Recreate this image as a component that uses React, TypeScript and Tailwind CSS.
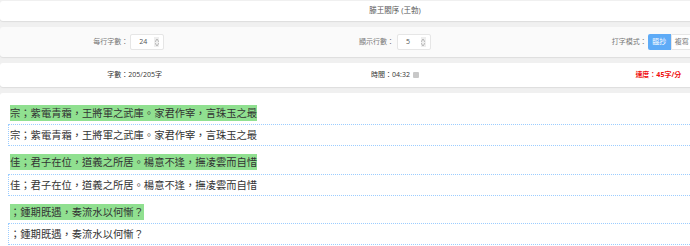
import React from 'react';

const lines = [
  '宗；紫電青霜，王將軍之武庫。家君作宰，言珠玉之最',
  '佳；君子在位，道義之所居。楊意不逢，撫凌雲而自惜',
  '；鍾期既遇，奏流水以何慚？',
];

function NumberBox({ value }: { value: string }) {
  return (
    <div className="w-[34px] h-[16px] bg-white border border-[#e6e6e6] rounded-[2px] flex items-center justify-between pl-[8px] pr-[4px]">
      <span className="text-[7px] text-[#555]">{value}</span>
      <div className="w-[5px] h-[10px] bg-[#eeeeee] flex flex-col items-center justify-center gap-[1px]">
        <svg width="4" height="3" viewBox="0 0 4 3">
          <path d="M0 3 L2 0 L4 3" fill="none" stroke="#aaa" strokeWidth="0.8" />
        </svg>
        <svg width="4" height="3" viewBox="0 0 4 3">
          <path d="M0 0 L2 3 L4 0" fill="none" stroke="#aaa" strokeWidth="0.8" />
        </svg>
      </div>
    </div>
  );
}

export default function App() {
  return (
    <div className="w-[690px] h-[246px] overflow-hidden bg-[#f0f0f0] font-['Open_Sans','Noto_Sans_CJK_TC',sans-serif]">
      <div className="w-[790px] flex flex-col gap-[6px] pt-[1px]">
        {/* 標題 */}
        <div className="h-[20px] bg-white rounded-[3px] shadow-[0_1px_1px_rgba(0,0,0,0.08)] flex items-center justify-center text-[7.5px] text-[#555]">
          滕王閣序 (王勃)
        </div>

        {/* 設定 */}
        <div className="h-[30px] bg-[#fafafa] rounded-[3px] shadow-[0_1px_1px_rgba(0,0,0,0.08)] grid grid-cols-3 items-center text-[7px] text-[#777]">
          <div className="flex items-center justify-center gap-[2px] pr-[6px]">
            <span>每行字數：</span>
            <NumberBox value="24" />
          </div>
          <div className="flex items-center justify-center gap-[3px]">
            <span>顯示行數：</span>
            <NumberBox value="5" />
          </div>
          <div className="flex items-center justify-center gap-[1px] pr-[4px]">
            <span>打字模式：</span>
            <div className="flex">
              <button className="w-[23px] h-[16px] bg-[#5eabf7] text-white rounded-l-[2px] flex items-center justify-center">
                臨抄
              </button>
              <button className="w-[30px] h-[16px] bg-white border border-[#e6e6e6] rounded-r-[2px] text-[#777] flex items-center pl-[3px]">
                複寫
              </button>
            </div>
          </div>
        </div>

        {/* 統計 */}
        <div className="h-[24px] bg-white rounded-[3px] shadow-[0_1px_1px_rgba(0,0,0,0.08)] grid grid-cols-3 items-center text-[7px] text-[#333]">
          <div className="text-center pl-[6px]">字數：205/205字</div>
          <div className="flex items-center justify-center gap-[3px]">
            <span>時間：04:32</span>
            <span className="w-[6px] h-[6px] bg-[#c8c8c8] rounded-[1px]" />
          </div>
          <div className="text-center font-bold text-[#f01010]">速度：45字/分</div>
        </div>

        {/* 文章 */}
        <div className="h-[160px] bg-white rounded-t-[3px] pt-[12px] pl-[8px] flex flex-col gap-[8px] text-[10.3px] text-[#333]">
          {lines.map((t, i) => (
            <div key={i} className="flex flex-col">
              <div>
                <span className="inline-block ml-[2px] bg-[#90e090] leading-[16px]">{t}</span>
              </div>
              <div className="mt-[3px] h-[22px] border border-dotted border-[#9ccdff] pl-[1px] flex items-center leading-none">
                {t}
              </div>
            </div>
          ))}
        </div>
      </div>
    </div>
  );
}
